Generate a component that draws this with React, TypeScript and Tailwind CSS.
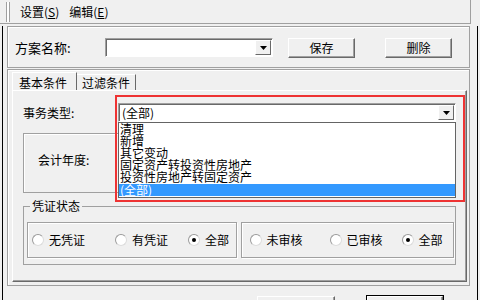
import React from 'react';

// --- small classic-win widgets ---

function Arrow() {
  return (
    <svg width="7" height="4" viewBox="0 0 7 4">
      <path d="M0 0h7L3.5 4z" fill="#000" />
    </svg>
  );
}

function Combo({ text, width }: { text?: string; width: string }) {
  return (
    <div className={`${width} h-[19px] flex bg-white border border-t-[#a0a0a0] border-l-[#a0a0a0] border-r-white border-b-white shadow-[inset_1px_1px_0_#696969]`}>
      <div className="flex-1 pl-[3px] pt-[1px] leading-[16px]">{text}</div>
      <div className="w-[16px] mt-[1px] mb-[1px] mr-[1px] flex items-center justify-center bg-[#f0f0f0] border border-t-white border-l-white border-r-[#696969] border-b-[#696969]">
        <Arrow />
      </div>
    </div>
  );
}

function Btn({ label, className = '' }: { label?: string; className?: string }) {
  return (
    <button className={`h-[20px] bg-[#f0f0f0] border border-t-white border-l-white border-r-[#696969] border-b-[#696969] shadow-[inset_-1px_-1px_0_#a0a0a0] leading-[16px] ${className}`}>
      {label}
    </button>
  );
}

function Radio({ label, checked, className = '' }: { label: string; checked?: boolean; className?: string }) {
  return (
    <div className={`flex items-center gap-[5px] ${className}`}>
      <span className="w-[12px] h-[12px] rounded-full bg-white border border-t-[#9a9a9a] border-l-[#9a9a9a] border-r-[#dcdcdc] border-b-[#dcdcdc] flex items-center justify-center">
        {checked && <span className="w-[4px] h-[4px] rounded-full bg-black" />}
      </span>
      <span>{label}</span>
    </div>
  );
}

const LIST = ['清理', '新增', '其它变动', '固定资产转投资性房地产', '投资性房地产转固定资产', '(全部)'];

export default function App() {
  return (
    <div className="w-[480px] h-[300px] overflow-hidden flex flex-col bg-[#f0f0f0] text-black text-[12px] font-['Noto_Sans_CJK_SC','Noto_Sans',sans-serif]">
      {/* menu bar */}
      <div className="w-[471px] h-[24px] shrink-0 flex items-center border-r border-b border-[#a0a0a0]">
        <div className="ml-[6px] w-[4px] h-[20px] border-x border-[#a0a0a0] bg-white" />
        <div className="ml-[10px] flex gap-[10px] leading-[14px]">
          <span>设置(<span className="underline">S</span>)</span>
          <span>编辑(<span className="underline">E</span>)</span>
        </div>
      </div>

      {/* body */}
      <div className="flex-1 mt-[2px] mx-[2px] border-x border-black">
        {/* scheme row */}
        <div className="ml-[4px] w-[463px] h-[42px] flex items-center pl-[7px] pt-[1px] border border-[#a0a0a0] shadow-[inset_1px_1px_0_#fff]">
          <span className="w-[90px] text-[13px]">方案名称:</span>
          <Combo width="w-[168px]" />
          <Btn label="保存" className="ml-[15px] w-[67px]" />
          <Btn label="删除" className="ml-[30px] w-[67px]" />
        </div>

        {/* tab frame */}
        <div className="mt-[1px] ml-[4px] w-[463px] h-[217px] border border-[#a0a0a0] shadow-[inset_1px_1px_0_#fff]">
          <div className="ml-[4px] mt-[2px] h-[18px] flex items-end leading-[16px]">
            <div className="w-[65px] h-[18px] pl-[6px] pt-[2px] border-t border-l border-white border-r border-r-[#696969]">基本条件</div>
            <div className="w-[59px] h-[16px] pl-[5px] border-t border-white border-r border-r-[#696969]">过滤条件</div>
          </div>

          <div className="relative ml-[4px] w-[455px] h-[192px] border border-t-white border-l-white border-r-[#696969] border-b-[#696969] shadow-[inset_-1px_-1px_0_#a0a0a0]">
            {/* 事务类型 */}
            <div className="flex items-center pt-[12px] pl-[10px]">
              <span className="w-[95px]">事务类型:</span>
              <div className="relative">
                <Combo text="(全部)" width="w-[338px]" />
                <div className="absolute z-10 left-0 top-full w-[338px] h-[76px] bg-white border border-[#646464] leading-[12px]">
                  {LIST.map((item, i) => (
                    <div
                      key={item}
                      className={i === LIST.length - 1 ? 'h-[12px] pl-[1px] mt-[1px] bg-[#3399ff] text-white' : 'h-[12px] pl-[1px]'}
                    >
                      {item}
                    </div>
                  ))}
                </div>
              </div>
            </div>

            {/* 会计年度 */}
            <div className="mt-[11px] ml-[10px] w-[433px] h-[60px] pl-[14px] pt-[17px] border border-[#a0a0a0] shadow-[inset_1px_1px_0_#fff]">
              会计年度:
            </div>

            {/* 凭证状态 */}
            <fieldset className="mt-[6px] ml-[10px] w-[433px] pl-[3px] pr-[1px] pt-[9px] pb-[6px] border border-[#a0a0a0]">
              <legend className="ml-[3px] px-[2px] leading-[14px]">凭证状态</legend>
              <div className="flex gap-[4px]">
                <div className="flex-1 h-[36px] flex items-center pl-[4px] border border-[#a0a0a0] shadow-[inset_1px_1px_0_#fff,1px_1px_0_#fff]">
                  <Radio label="无凭证" className="w-[83px]" />
                  <Radio label="有凭证" className="w-[73px]" />
                  <Radio label="全部" checked />
                </div>
                <div className="flex-1 h-[36px] flex items-center pl-[8px] border border-[#a0a0a0] shadow-[inset_1px_1px_0_#fff,1px_1px_0_#fff]">
                  <Radio label="未审核" className="w-[80px]" />
                  <Radio label="已审核" className="w-[72px]" />
                  <Radio label="全部" checked />
                </div>
              </div>
            </fieldset>

            {/* annotation */}
            <div className="absolute z-20 left-[102px] top-[4px] w-[350px] h-[107px] border-2 border-[#ee3333] pointer-events-none" />
          </div>
        </div>

        {/* bottom buttons, cut by window edge */}
        <div className="mt-[10px] flex">
          <Btn className="ml-[254px] w-[78px]" />
          <Btn className="ml-[32px] w-[76px] outline outline-1 outline-black" />
        </div>
      </div>
    </div>
  );
}
